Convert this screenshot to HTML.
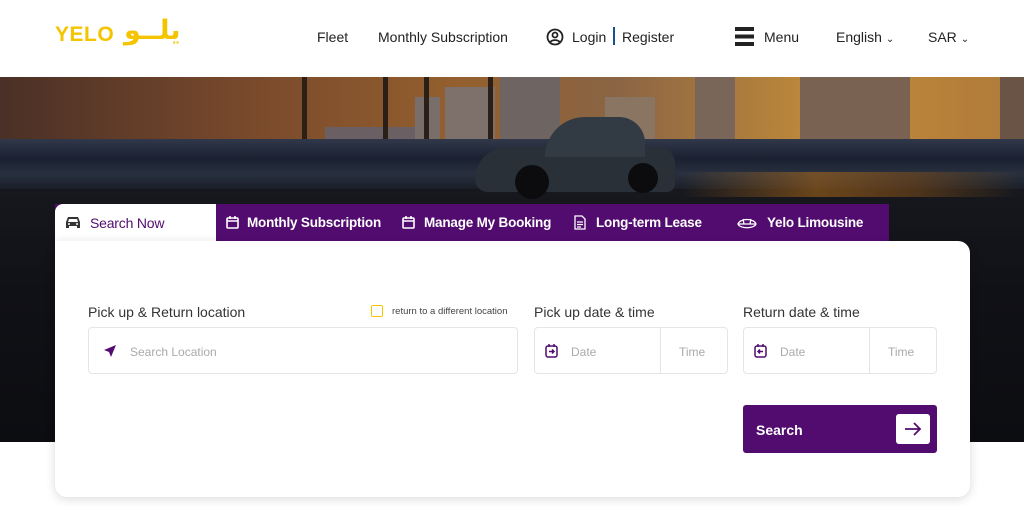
<!DOCTYPE html>
<html><head><meta charset="utf-8"><style>
*{box-sizing:border-box;margin:0;padding:0}
body{width:1024px;height:506px;overflow:hidden;background:#fff;font-family:"Liberation Sans",Arial,sans-serif;position:relative;color:#333}
.hdr{position:absolute;left:0;top:0;width:1024px;height:77px;background:#fff;z-index:5}
.hdr span{position:absolute;top:29px;font-size:14px;color:#222}
.hero{position:absolute;left:0;top:77px;width:1024px;height:365px;overflow:hidden;
background:linear-gradient(180deg,#3a2a22 0%,#2a2a30 30%,#1c2230 45%,#12161e 65%,#0b0c10 100%)}
.sky{position:absolute;left:0;top:0;width:1024px;height:70px;background:linear-gradient(90deg,#4a3026 0%,#7a4a2c 25%,#94602e 45%,#8a6444 60%,#c08a3a 80%,#b07a3a 100%)}
.bld{position:absolute;bottom:0}
.rail{position:absolute;left:0;top:62px;width:1024px;height:50px;background:linear-gradient(180deg,#30384a,#1a2030 40%,#28303e 70%,#1a1e28)}
.road{position:absolute;left:0;top:112px;width:1024px;height:253px;background:linear-gradient(180deg,#16181e,#101116 40%,#0c0d11)}
.card{position:absolute;left:55px;top:241px;width:915px;height:256px;background:#fff;border-radius:0 12px 12px 12px;box-shadow:0 2px 10px rgba(0,0,0,.15)}
.tabs{position:absolute;left:55px;top:204px;height:37px;width:834px;background:#520c6f}
.tab{position:absolute;top:0;height:37px;line-height:38px;color:#fff;font-weight:bold;font-size:13.5px;letter-spacing:-0.2px}
.lbl{position:absolute;font-size:14px;color:#333}
.box{position:absolute;border:1px solid #e5e5e5;border-radius:4px;height:47px;top:327px;background:#fff}
.ph{position:absolute;font-size:12px;color:#aaa;top:17px}
</style></head><body>
<div class="hdr">
<div style="position:absolute;left:55px;top:23px;font-weight:bold;font-size:21px;color:#f5c400;letter-spacing:0.5px">YELO</div>
<div style="position:absolute;left:124px;top:15px;font-weight:bold;font-size:27px;color:#f5c400;font-family:'DejaVu Sans',sans-serif">يلــو</div>
<span style="left:317px">Fleet</span>
<span style="left:378px">Monthly Subscription</span>
<svg style="position:absolute;left:546px;top:28px" width="18" height="18" viewBox="0 0 18 18" fill="none" stroke="#222" stroke-width="1.8"><circle cx="9" cy="9" r="7.5"/><circle cx="9" cy="7" r="2.5"/><path d="M4.5 14c1.5-2.5 7.5-2.5 9 0"/></svg>
<span style="left:572px">Login</span>
<div style="position:absolute;left:613px;top:27px;width:1.5px;height:18px;background:#1b4f8f"></div>
<span style="left:622px">Register</span>
<div style="position:absolute;left:735px;top:27px;width:19px;height:19px;background:linear-gradient(#222 0 4px,transparent 4px 7.5px,#222 7.5px 11.5px,transparent 11.5px 15px,#222 15px 19px)"></div>
<span style="left:764px">Menu</span>
<span style="left:836px">English <small style="font-size:10px">⌄</small></span>
<span style="left:928px">SAR <small style="font-size:10px">⌄</small></span>
</div>
<div class="hero">
<div class="sky">
<div class="bld" style="left:325px;width:90px;height:20px;background:#6a6064"></div>
<div class="bld" style="left:415px;width:25px;height:50px;background:#7a6e6a"></div>
<div class="bld" style="left:445px;width:50px;height:60px;background:#7e706a"></div>
<div class="bld" style="left:500px;width:60px;height:70px;background:#6e6462"></div>
<div class="bld" style="left:605px;width:50px;height:50px;background:#8a7462"></div>
<div class="bld" style="left:695px;width:40px;height:70px;background:#7a6658"></div>
<div class="bld" style="left:800px;width:110px;height:70px;background:#7a6252"></div>
<div class="bld" style="left:1000px;width:24px;height:70px;background:#6a5446"></div>
</div>
<div style="position:absolute;left:302px;top:0;width:5px;height:70px;background:#2a2018"></div>
<div style="position:absolute;left:383px;top:0;width:5px;height:70px;background:#2a2018"></div>
<div style="position:absolute;left:424px;top:0;width:5px;height:70px;background:#2a2018"></div>
<div style="position:absolute;left:488px;top:0;width:5px;height:70px;background:#2a2018"></div>
<div class="rail"></div>
<div class="road"></div>
<div style="position:absolute;left:680px;top:95px;width:340px;height:25px;background:linear-gradient(90deg,transparent,#b06a18 40%,#7a4a18 70%,transparent);opacity:.55"></div>
<div style="position:absolute;left:475px;top:70px;width:200px;height:45px;background:#2a3038;border-radius:40px 20px 10px 16px"></div>
<div style="position:absolute;left:545px;top:40px;width:100px;height:40px;background:#323a44;border-radius:40px 26px 0 0"></div>
<div style="position:absolute;left:515px;top:88px;width:34px;height:34px;background:#0c0c0e;border-radius:50%"></div>
<div style="position:absolute;left:628px;top:86px;width:30px;height:30px;background:#0c0c0e;border-radius:50%"></div>
</div>
<div class="tabs">
<div style="position:absolute;left:0;top:0;width:161px;height:37px;background:#fff;border-radius:8px 0 0 0"></div>
<svg style="position:absolute;left:10px;top:12px" width="16" height="13" viewBox="0 0 16 13" fill="#333"><path d="M3 1h10l2 5v6h-3v-2H4v2H1V6zM4 3L3 6h10l-1-3z"/><circle cx="4" cy="8" r="1" fill="#fff"/><circle cx="12" cy="8" r="1" fill="#fff"/></svg>
<div class="tab" style="left:35px;color:#520c6f;font-weight:normal;font-size:14px">Search Now</div>
<svg style="position:absolute;left:171px;top:12px" width="13" height="13" viewBox="0 0 13 13" fill="none" stroke="#fff" stroke-width="1.6"><rect x="1" y="2" width="11" height="10" rx="1"/><path d="M1 5h11M4 0v3M9 0v3"/></svg>
<div class="tab" style="left:192px">Monthly Subscription</div>
<svg style="position:absolute;left:347px;top:12px" width="13" height="13" viewBox="0 0 13 13" fill="none" stroke="#fff" stroke-width="1.6"><rect x="1" y="2" width="11" height="10" rx="1"/><path d="M1 5h11M4 0v3M9 0v3"/></svg>
<div class="tab" style="left:369px">Manage My Booking</div>
<svg style="position:absolute;left:519px;top:11px" width="12" height="15" viewBox="0 0 12 15" fill="none" stroke="#fff" stroke-width="1.3"><path d="M1 1h7l3 3v10H1z M3 7h6M3 9.5h6M3 12h4"/></svg>
<div class="tab" style="left:541px">Long-term Lease</div>
<svg style="position:absolute;left:682px;top:12px" width="20" height="14" viewBox="0 0 20 14" fill="none" stroke="#fff" stroke-width="1.3"><path d="M1 8c2-6 16-6 18 0c-2 5-16 5-18 0zM1 8h18M6 3l1 5M14 3l-1 5"/></svg>
<div class="tab" style="left:712px">Yelo Limousine</div>
</div>
<div class="card"></div>
<div class="lbl" style="left:88px;top:304px">Pick up &amp; Return location</div>
<div style="position:absolute;left:371px;top:305px;width:12px;height:12px;border:1.5px solid #f5c400;border-radius:2px"></div>
<div style="position:absolute;left:392px;top:306px;font-size:9.5px;color:#444">return to a different location</div>
<div class="box" style="left:88px;width:430px">
<svg style="position:absolute;left:14px;top:16px" width="14" height="14" viewBox="0 0 14 14"><path d="M13 1L1 6l5 2 2 5z" fill="#520c6f"/></svg>
<div class="ph" style="left:41px">Search Location</div></div>
<div class="lbl" style="left:534px;top:304px">Pick up date &amp; time</div>
<div class="box" style="left:534px;width:194px">
<svg style="position:absolute;left:10px;top:16px" width="13" height="14" viewBox="0 0 13 14" fill="none" stroke="#520c6f" stroke-width="1.5"><rect x="1" y="2" width="11" height="11" rx="2"/><path d="M4 0v3M9 0v3M4 7.5h5M7 5.5l2 2-2 2"/></svg>
<div class="ph" style="left:36px">Date</div>
<div style="position:absolute;left:125px;top:0;width:1px;height:45px;background:#e5e5e5"></div>
<div class="ph" style="left:144px">Time</div></div>
<div class="lbl" style="left:743px;top:304px">Return date &amp; time</div>
<div class="box" style="left:743px;width:194px">
<svg style="position:absolute;left:10px;top:16px" width="13" height="14" viewBox="0 0 13 14" fill="none" stroke="#520c6f" stroke-width="1.5"><rect x="1" y="2" width="11" height="11" rx="2"/><path d="M4 0v3M9 0v3M4 7.5h5M6 5.5l-2 2 2 2"/></svg>
<div class="ph" style="left:36px">Date</div>
<div style="position:absolute;left:125px;top:0;width:1px;height:45px;background:#e5e5e5"></div>
<div class="ph" style="left:144px">Time</div></div>
<div style="position:absolute;left:743px;top:405px;width:194px;height:48px;background:#520c6f;border-radius:3px">
<div style="position:absolute;left:13px;top:17px;color:#fff;font-weight:bold;font-size:14px">Search</div>
<div style="position:absolute;left:153px;top:9px;width:34px;height:30px;background:#fff;border-radius:3px">
<svg style="position:absolute;left:8px;top:7px" width="18" height="16" viewBox="0 0 18 16" fill="none" stroke="#520c6f" stroke-width="1.8"><path d="M1 8h15M10 2l6 6-6 6"/></svg></div></div>
</body></html>
